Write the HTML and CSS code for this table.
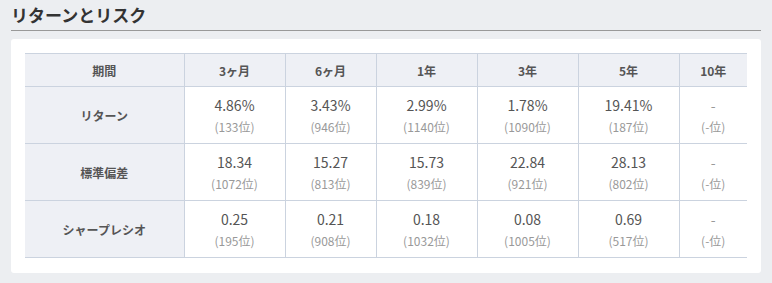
FILE: index.html
```html
<!DOCTYPE html>
<html lang="ja">
<head>
<meta charset="utf-8">
<link rel="stylesheet" href="styles.css">
</head>
<body>
<div class="page">
  <h2 class="title">リターンとリスク</h2>
  <div class="card">
    <table class="rr">
      <colgroup>
        <col class="c0"><col class="c1"><col class="c2"><col class="c3"><col class="c4"><col class="c5"><col class="c6">
      </colgroup>
      <thead>
        <tr><th>期間</th><th>3ヶ月</th><th>6ヶ月</th><th>1年</th><th>3年</th><th>5年</th><th>10年</th></tr>
      </thead>
      <tbody>
        <tr>
          <th>リターン</th>
          <td><span class="v">4.86%</span><span class="r">(133位)</span></td>
          <td><span class="v">3.43%</span><span class="r">(946位)</span></td>
          <td><span class="v">2.99%</span><span class="r">(1140位)</span></td>
          <td><span class="v">1.78%</span><span class="r">(1090位)</span></td>
          <td><span class="v">19.41%</span><span class="r">(187位)</span></td>
          <td><span class="v dash">-</span><span class="r">(-位)</span></td>
        </tr>
        <tr>
          <th>標準偏差</th>
          <td><span class="v">18.34</span><span class="r">(1072位)</span></td>
          <td><span class="v">15.27</span><span class="r">(813位)</span></td>
          <td><span class="v">15.73</span><span class="r">(839位)</span></td>
          <td><span class="v">22.84</span><span class="r">(921位)</span></td>
          <td><span class="v">28.13</span><span class="r">(802位)</span></td>
          <td><span class="v dash">-</span><span class="r">(-位)</span></td>
        </tr>
        <tr>
          <th>シャープレシオ</th>
          <td><span class="v">0.25</span><span class="r">(195位)</span></td>
          <td><span class="v">0.21</span><span class="r">(908位)</span></td>
          <td><span class="v">0.18</span><span class="r">(1032位)</span></td>
          <td><span class="v">0.08</span><span class="r">(1005位)</span></td>
          <td><span class="v">0.69</span><span class="r">(517位)</span></td>
          <td><span class="v dash">-</span><span class="r">(-位)</span></td>
        </tr>
      </tbody>
    </table>
  </div>
</div>
</body>
</html>
```
FILE: styles.css
```css
html, body {
  margin: 0;
  padding: 0;
  background: #eceef1;
}
body {
  font-family: "Noto Sans CJK JP", "Noto Sans", sans-serif;
  color: #555;
}
.page {
  width: 750px;
  padding: 0 11px;
}
.title {
  margin: 0;
  height: 30px;
  font-size: 17px;
  line-height: 30px;
  font-weight: bold;
  color: #333;
  border-bottom: 1px solid #999;
  box-sizing: content-box;
}
.card {
  margin-top: 8px;
  background: #fff;
  border-radius: 3px;
  padding: 14px 14px 15px;
}
.rr {
  width: 722px;
  border-collapse: collapse;
  table-layout: fixed;
}
.c0 { width: 159px; }
.c1 { width: 101px; }
.c2 { width: 91px; }
.c3 { width: 101px; }
.c4 { width: 101px; }
.c5 { width: 101px; }
.c6 { width: 68px; }
.rr th, .rr td {
  border: 1px solid #cbd3df;
  text-align: center;
  vertical-align: middle;
  padding: 0;
}
.rr th {
  background: #eef0f5;
  font-size: 12px;
  font-weight: bold;
  color: #555;
}
.rr tr:first-child th, .rr tr:first-child td {
  border-top-color: #cbd3df;
}
.rr thead tr { height: 33px; }
.rr tbody tr { height: 57px; }
.rr thead th { border-top: 1px solid #cbd3df; }
.rr tr > :first-child { border-left: none; }
.rr tr > :last-child { border-right: none; }
.rr td { background: #fff; }
.v {
  display: block;
  font-size: 14px;
  line-height: 23px;
  color: #555;
}
.v.dash { color: #999; }
.r {
  display: block;
  font-size: 12px;
  line-height: 20px;
  color: #999;
}
```
